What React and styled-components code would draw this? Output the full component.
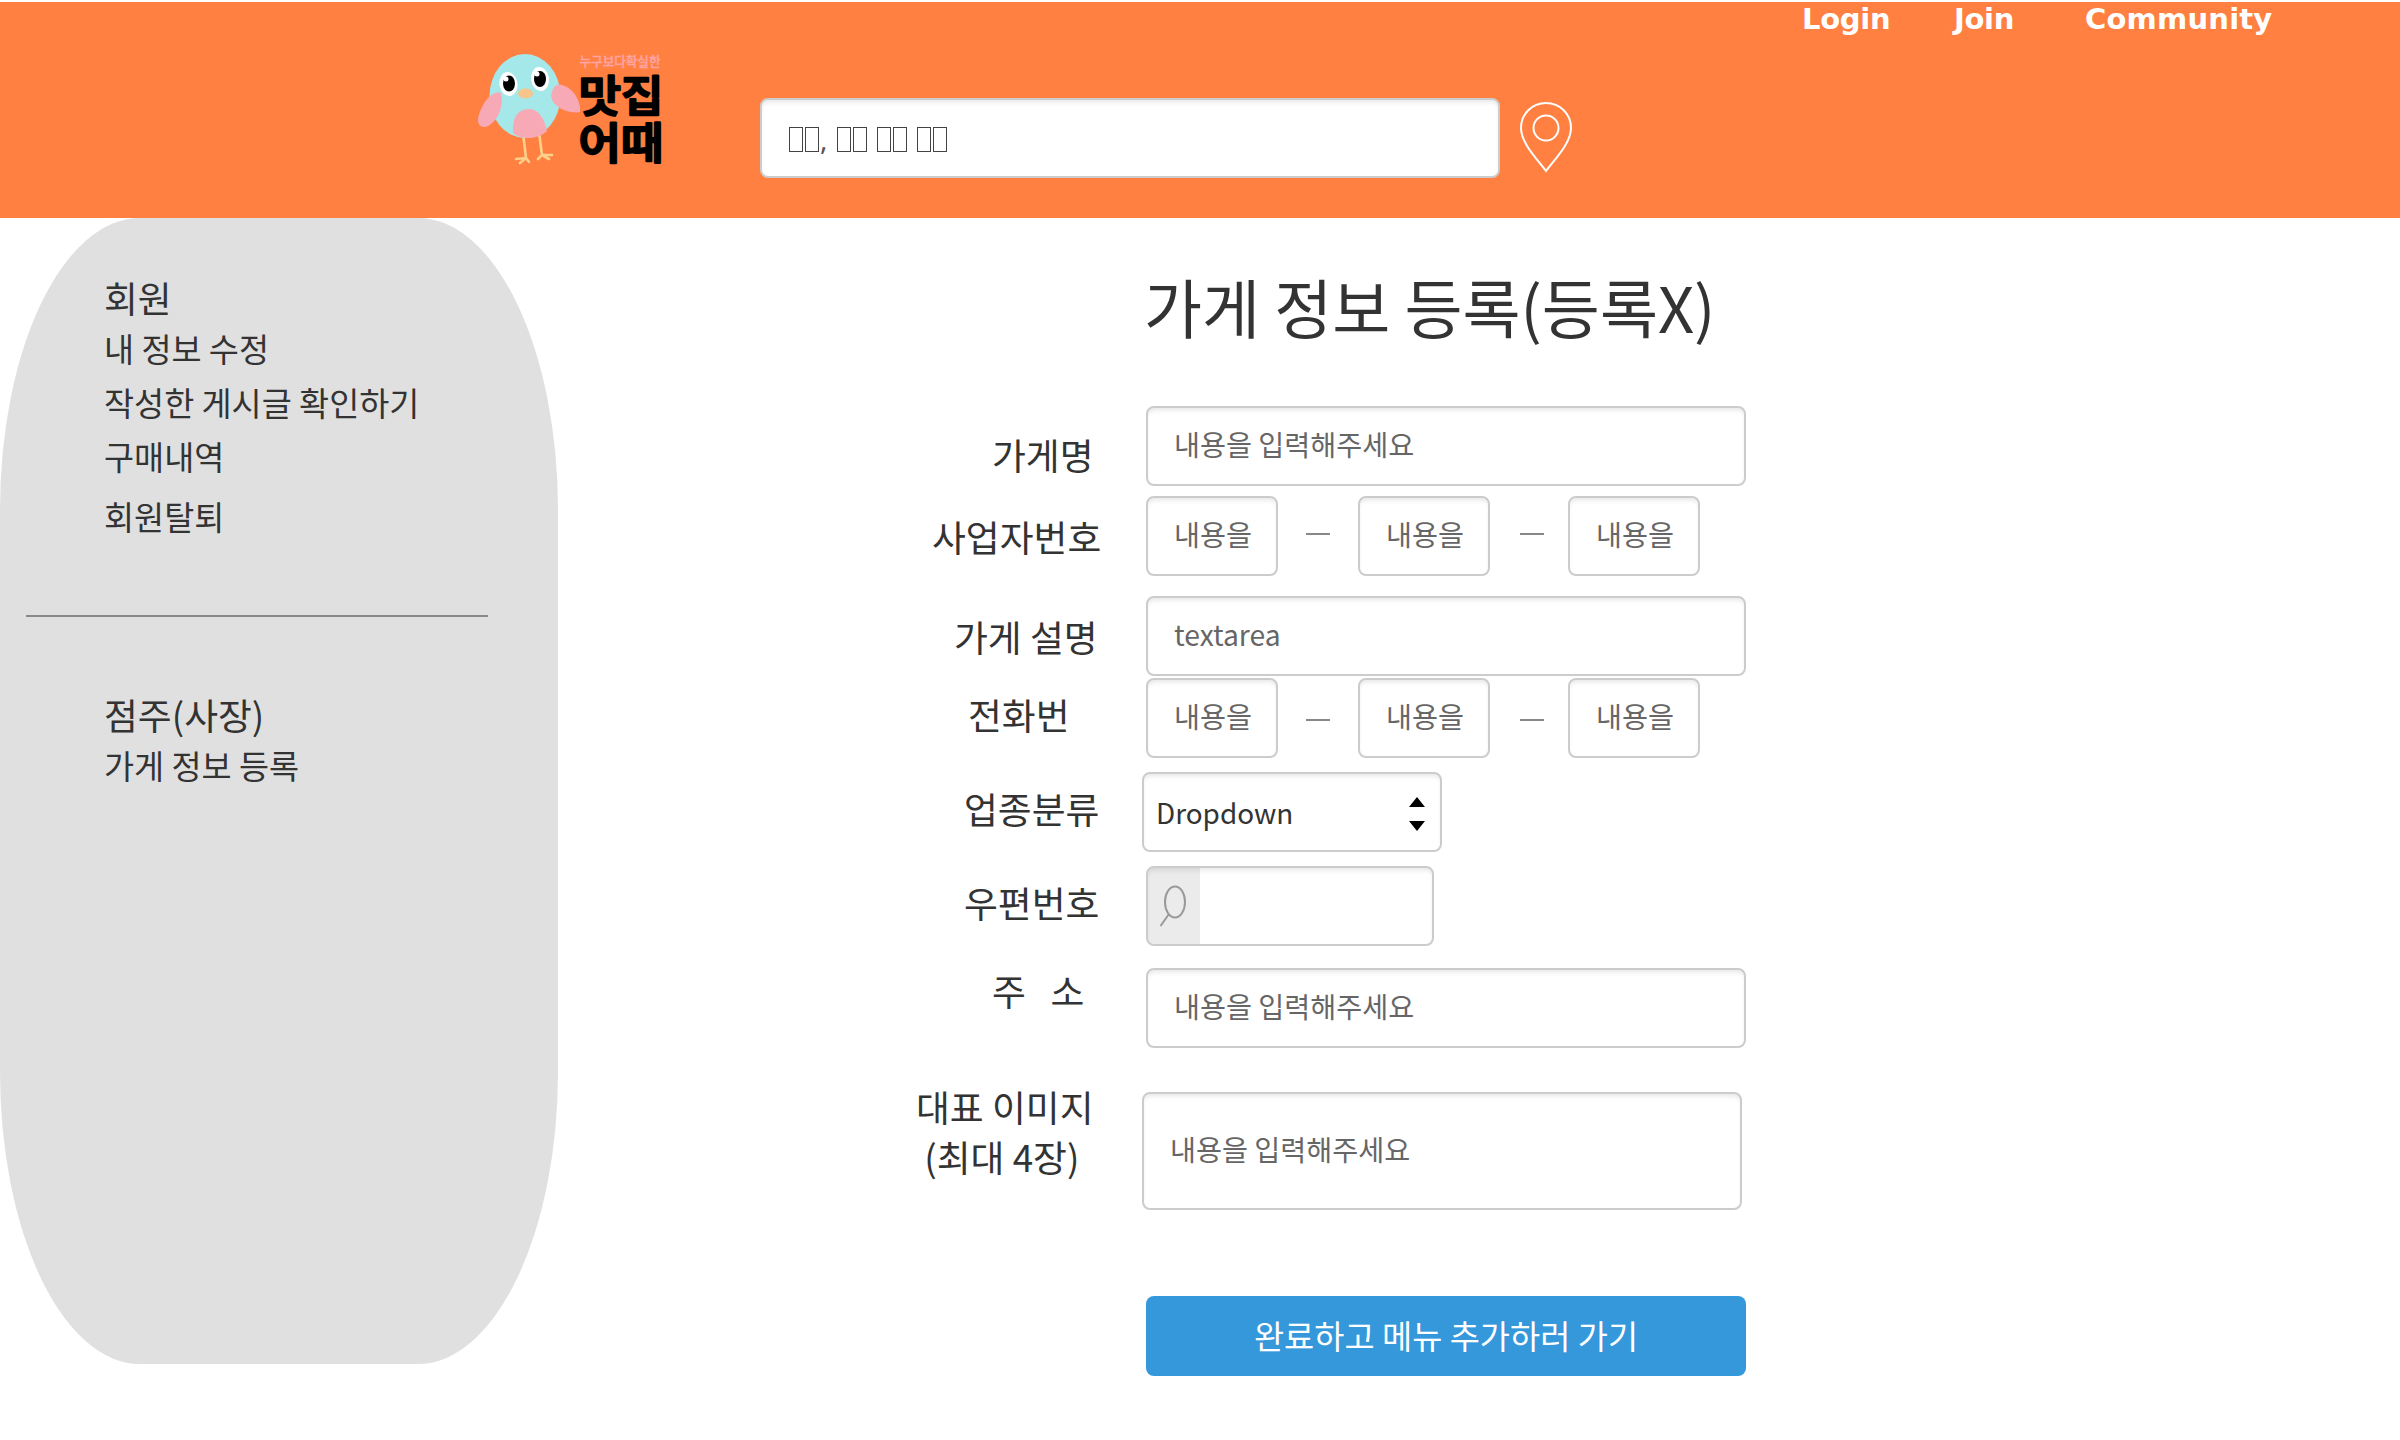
import React from "react";
import styled, { createGlobalStyle } from "styled-components";

const KR = `"Noto Sans CJK KR", "Noto Sans", sans-serif`;

const Global = createGlobalStyle`
  * { box-sizing: border-box; }
  body { margin: 0; background: #fff; color: #333; font-family: ${KR}; }
  h1, h2, p, ul { margin: 0; padding: 0; font-weight: 400; list-style: none; }
`;

const Page = styled.div`
  width: 2400px;
  height: 1440px;
  padding-top: 2px;
  overflow: hidden;
`;

const Header = styled.header`
  display: flex;
  height: 216px;
  padding-left: 474px;
  background: #ff8041;
`;

const Logo = styled.svg`
  flex: none;
  width: 196px;
  height: 140px;
  margin-top: 36px;
`;

const Search = styled.div`
  display: flex;
  flex: none;
  align-items: center;
  width: 740px;
  height: 80px;
  margin: 96px 0 0 90px;
  padding: 1px 0 0 27px;
  border: 2px solid #ccc;
  border-radius: 8px;
  background: #fff;
  box-shadow: inset 0 4px 5px -2px rgba(0, 0, 0, 0.1);
  color: #555;
  font-size: 28px;
`;

const Word = styled.span`
  display: flex;
  gap: 2px;
  margin-right: ${(p) => (p.$last || p.$tight ? 0 : 10)}px;
`;

const Box = styled.i`
  width: 14px;
  height: 25px;
  margin-top: 2px;
  border: 1px solid #444;
`;

const Comma = styled.span`
  width: 18px;
  padding-left: 1px;
  font-family: "Noto Sans", sans-serif;
  line-height: 40px;
`;

const Pin = styled.svg`
  flex: none;
  width: 56px;
  height: 74px;
  margin: 99px 0 0 18px;
`;

const Nav = styled.nav`
  display: flex;
  margin: 0 0 0 228px;
  color: #fff;
  font: 700 29px/34px "DejaVu Sans", sans-serif;
`;

const NavItem = styled.span`
  width: ${(p) => p.$w}px;
  letter-spacing: ${(p) => p.$track}px;
`;

const Body = styled.div`
  display: flex;
  height: 1222px;
`;

const Sidebar = styled.aside`
  width: 558px;
  height: 1146px;
  padding-top: 51px;
  border-radius: 140px / 292px;
  background: #e0e0e0;
`;

const Group = styled.section`
  padding-left: 104px;
`;

const GroupTitle = styled.h2`
  height: 54px;
  font-size: 36.8px;
  line-height: 56px;
`;

const MenuItem = styled.li`
  height: ${(p) => p.$h || 54}px;
  font-size: 32.7px;
  line-height: 50px;
`;

const Rule = styled.hr`
  width: 462px;
  height: 2px;
  margin: 70px 0 69px 26px;
  border: 0;
  background: #888;
`;

const Main = styled.main`
  width: 880px;
  margin-left: 342px;
`;

const Title = styled.h1`
  height: 188px;
  padding: 42px 0 0 244px;
  font-size: 63.1px;
  line-height: 92px;
  white-space: nowrap;
`;

const Row = styled.div`
  display: flex;
  height: ${(p) => p.$h || 80}px;
  margin-bottom: ${(p) => p.$gap}px;
`;

const Label = styled.div`
  flex: none;
  width: ${(p) => p.$w || 246}px;
  margin-top: ${(p) => p.$top}px;
  padding-left: ${(p) => p.$left}px;
  font-size: 36.8px;
  line-height: 50px;
  white-space: pre;
`;

const Field = styled.div`
  display: flex;
  align-items: center;
  width: ${(p) => p.$w || 600}px;
  height: 100%;
  padding: ${(p) => (p.$select ? "0 0 0 12px" : "0 0 4px 26px")};
  overflow: hidden;
  border: 2px solid #ccc;
  border-radius: 8px;
  background: #fff;
  box-shadow: inset 0 4px 5px -2px rgba(0, 0, 0, 0.1);
  color: ${(p) => (p.$select ? "#333" : "#666")};
  font-size: ${(p) => (p.$select ? 27.9 : 28.25)}px;
  line-height: 40px;
  white-space: nowrap;
`;

const Dash = styled.span`
  width: 24px;
  height: 2px;
  margin: ${(p) => p.$top}px ${(p) => p.$right}px 0 ${(p) => p.$left}px;
  background: #888;
`;

const Arrows = styled.svg`
  width: 16px;
  height: 34px;
  margin: 4px 15px 0 auto;
`;

const ZipField = styled(Field)`
  padding: 0;
`;

const Addon = styled.span`
  display: flex;
  align-items: center;
  justify-content: center;
  width: 52px;
  height: 100%;
  padding-right: 3px;
  background: rgba(0, 0, 0, 0.08);
`;

const Submit = styled.div`
  display: flex;
  align-items: center;
  justify-content: center;
  width: 600px;
  height: 80px;
  margin-left: 246px;
  padding-bottom: 3px;
  border-radius: 8px;
  background: #3498db;
  color: #fff;
  font-size: 32.8px;
  line-height: 48px;
`;

const BirdLogo = () => (
  <Logo viewBox="0 0 196 140">
    <g fill="none" stroke="#ffd08a" strokeWidth="2.600" strokeLinecap="round">
      <path d="M49 95L52 120M42 121L52 120M46 125L52 120L55 124M65 94L68 117M64 121L68 117L78 117M68 117L75 121" />
    </g>
    <ellipse cx="51" cy="58" rx="35.500" ry="42" fill="#a4e8ea" />
    <path d="M39 95C38 79 44 71 55 71C66 71 71 84 73 93C65 101 48 103 39 95Z" fill="#f7a9b5" />
    <path d="M27 55C16 51 5 71 4 82C4 90 12 91 17 86C24 81 30 68 27 55Z" fill="#f7a9b5" />
    <path d="M77 58C79 46 84 44 93 49C102 54 107 66 106 74C97 76 79 71 77 58Z" fill="#f7a9b5" />
    <ellipse cx="34.500" cy="46" rx="9" ry="12" fill="#fff" transform="rotate(-8 34.500 46)" />
    <ellipse cx="66" cy="41" rx="9" ry="12" fill="#fff" transform="rotate(-8 66 41)" />
    <ellipse cx="35" cy="45.500" rx="6" ry="8" fill="#000" />
    <ellipse cx="66" cy="41" rx="6" ry="8" fill="#000" />
    <circle cx="32" cy="41" r="2.500" fill="#fff" />
    <circle cx="63" cy="36" r="2.500" fill="#fff" />
    <ellipse cx="51.500" cy="55.500" rx="7.500" ry="5" fill="#f5c58b" />
    <text x="105.500" y="27.500" textLength="81" lengthAdjust="spacingAndGlyphs" fontFamily={KR} fontSize="13" fontWeight="500" fill="#ffa3a3" stroke="#ffa3a3" strokeWidth="0.400">누구보다확실한</text>
    <g fontFamily={KR} fontSize="43.500" fontWeight="500" fill="#000" stroke="#000" strokeWidth="2.400" strokeLinejoin="round">
      <text x="104.500" y="73.500" textLength="85" lengthAdjust="spacingAndGlyphs">맛집</text>
      <text x="104.500" y="121" textLength="85" lengthAdjust="spacingAndGlyphs">어때</text>
    </g>
  </Logo>
);

const NumberFields = ({ dashTop }) => (
  <>
    <Field $w={132}>내용을</Field>
    <Dash $top={dashTop} $left={28} $right={28} />
    <Field $w={132}>내용을</Field>
    <Dash $top={dashTop} $left={30} $right={24} />
    <Field $w={132}>내용을</Field>
  </>
);

export default function App() {
  return (
    <Page>
      <Global />
      <Header>
        <BirdLogo />
        <Search>
          <Word $tight><Box /><Box /></Word>
          <Comma>,</Comma>
          <Word><Box /><Box /></Word>
          <Word><Box /><Box /></Word>
          <Word $last><Box /><Box /></Word>
        </Search>
        <Pin viewBox="0 0 56 74" fill="none" stroke="#fff" strokeWidth="2">
          <path d="M28 70C19 58 3 42 3 27C3 13 14 2 28 2S53 13 53 27C53 42 37 58 28 70Z" />
          <circle cx="28" cy="27" r="12.500" />
        </Pin>
        <Nav>
          <NavItem $w={152} $track={-0.3}>Login</NavItem>
          <NavItem $w={131} $track={-0.3}>Join</NavItem>
          <NavItem $track={0.2}>Community</NavItem>
        </Nav>
      </Header>
      <Body>
        <Sidebar>
          <Group>
            <GroupTitle>회원</GroupTitle>
            <ul>
              <MenuItem>내 정보 수정</MenuItem>
              <MenuItem>작성한 게시글 확인하기</MenuItem>
              <MenuItem $h={60}>구매내역</MenuItem>
              <MenuItem>회원탈퇴</MenuItem>
            </ul>
          </Group>
          <Rule />
          <Group>
            <GroupTitle>점주(사장)</GroupTitle>
            <ul>
              <MenuItem>가게 정보 등록</MenuItem>
            </ul>
          </Group>
        </Sidebar>
        <Main>
          <Title>가게 정보 등록(등록X)</Title>
          <Row $gap={10}>
            <Label $top={23} $left={92}>가게명</Label>
            <Field>내용을 입력해주세요</Field>
          </Row>
          <Row $gap={20}>
            <Label $top={15} $left={32}>사업자번호</Label>
            <NumberFields dashTop={37} />
          </Row>
          <Row $gap={2}>
            <Label $top={15} $left={54}>가게 설명</Label>
            <Field>textarea</Field>
          </Row>
          <Row $gap={14}>
            <Label $top={11} $left={68}>전화번</Label>
            <NumberFields dashTop={41} />
          </Row>
          <Row $gap={14}>
            <Label $w={242} $top={11} $left={64}>업종분류</Label>
            <Field $w={300} $select>
              Dropdown
              <Arrows viewBox="0 0 16 34"><path d="M0 10L8 0L16 10ZM0 24L8 34L16 24Z" /></Arrows>
            </Field>
          </Row>
          <Row $gap={22}>
            <Label $top={11} $left={64}>우편번호</Label>
            <ZipField $w={288}>
              <Addon>
                <svg width="28" height="42" viewBox="0 0 28 42" fill="none" stroke="#999" strokeWidth="2">
                  <ellipse cx="16" cy="17" rx="10" ry="15.500" />
                  <path d="M10 29L1.500 41" />
                </svg>
              </Addon>
            </ZipField>
          </Row>
          <Row $gap={44}>
            <Label $top={-3} $left={92}>{"주   소"}</Label>
            <Field>내용을 입력해주세요</Field>
          </Row>
          <Row $h={118} $gap={86}>
            <Label $w={242} $top={-11} $left={16}>{"대표 이미지\n (최대 4장)"}</Label>
            <Field>내용을 입력해주세요</Field>
          </Row>
          <Submit>완료하고 메뉴 추가하러 가기</Submit>
        </Main>
      </Body>
    </Page>
  );
}
